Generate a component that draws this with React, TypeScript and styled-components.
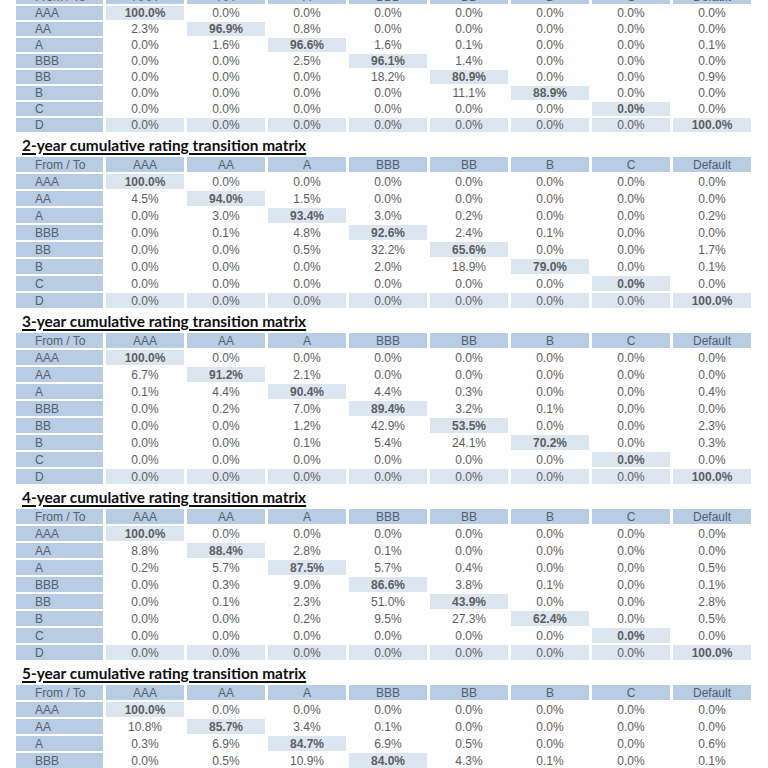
import React from "react";
import styled, { createGlobalStyle } from "styled-components";

const Global = createGlobalStyle`
  html, body { margin: 0; padding: 0; background: #ffffff; }
  body { font-family: "Liberation Sans", Arial, sans-serif; overflow: hidden; }
`;

const Page = styled.div`
  display: flex;
  flex-direction: column;
  padding-left: 16px;
  margin-top: -10px;
  width: 752px;
`;

const Section = styled.section`
  display: flex;
  flex-direction: column;
`;

const Title = styled.h2`
  margin: 0;
  height: 25px;
  display: flex;
  align-items: center;
  padding-left: 6px;
  font-family: Lato, "Open Sans", sans-serif;
  font-weight: 700;
  font-size: 15.4px;
  color: #111111;
  text-decoration: underline;
  text-decoration-thickness: 1.5px;
  text-underline-offset: 2px;
`;

const Grid = styled.div<{ $row: number }>`
  display: grid;
  grid-template-columns: 87px repeat(8, 78px);
  grid-auto-rows: ${(p) => p.$row}px;
  column-gap: 3px;
  row-gap: 2px;
`;

type Kind = "head" | "label" | "data" | "hl";

const Cell = styled.div<{ $kind: Kind; $bold?: boolean }>`
  display: flex;
  align-items: center;
  justify-content: ${(p) => (p.$kind === "label" || p.$kind === "head" ? "flex-start" : "center")};
  padding-left: ${(p) => (p.$kind === "label" ? "19px" : "0")};
  font-size: 12px;
  line-height: 1;
  font-weight: ${(p) => (p.$bold ? 700 : 400)};
  color: ${(p) => (p.$kind === "label" || p.$kind === "head" ? "#56606c" : "#5e5e5e")};
  background: ${(p) =>
    p.$kind === "label" || p.$kind === "head"
      ? "#b8cce4"
      : p.$kind === "hl"
      ? "#dce6f1"
      : "transparent"};
  white-space: nowrap;
`;

const HeadCell = styled(Cell)`
  justify-content: center;
`;

const COLS = ["AAA", "AA", "A", "BBB", "BB", "B", "C", "Default"];
const ROWS = ["AAA", "AA", "A", "BBB", "BB", "B", "C", "D"];

const C_ROW = [0, 0, 0, 0, 0, 0, 0, 0];
const D_ROW = [0, 0, 0, 0, 0, 0, 0, 100];

type Matrix = { title?: string; row: number; data: number[][] };

const matrices: Matrix[] = [
  {
    row: 14,
    data: [
      [100, 0, 0, 0, 0, 0, 0, 0],
      [2.3, 96.9, 0.8, 0, 0, 0, 0, 0],
      [0, 1.6, 96.6, 1.6, 0.1, 0, 0, 0.1],
      [0, 0, 2.5, 96.1, 1.4, 0, 0, 0],
      [0, 0, 0, 18.2, 80.9, 0, 0, 0.9],
      [0, 0, 0, 0, 11.1, 88.9, 0, 0],
      C_ROW,
      D_ROW,
    ],
  },
  {
    title: "2-year cumulative rating transition matrix",
    row: 15,
    data: [
      [100, 0, 0, 0, 0, 0, 0, 0],
      [4.5, 94.0, 1.5, 0, 0, 0, 0, 0],
      [0, 3.0, 93.4, 3.0, 0.2, 0, 0, 0.2],
      [0, 0.1, 4.8, 92.6, 2.4, 0.1, 0, 0],
      [0, 0, 0.5, 32.2, 65.6, 0, 0, 1.7],
      [0, 0, 0, 2.0, 18.9, 79.0, 0, 0.1],
      C_ROW,
      D_ROW,
    ],
  },
  {
    title: "3-year cumulative rating transition matrix",
    row: 15,
    data: [
      [100, 0, 0, 0, 0, 0, 0, 0],
      [6.7, 91.2, 2.1, 0, 0, 0, 0, 0],
      [0.1, 4.4, 90.4, 4.4, 0.3, 0, 0, 0.4],
      [0, 0.2, 7.0, 89.4, 3.2, 0.1, 0, 0],
      [0, 0, 1.2, 42.9, 53.5, 0, 0, 2.3],
      [0, 0, 0.1, 5.4, 24.1, 70.2, 0, 0.3],
      C_ROW,
      D_ROW,
    ],
  },
  {
    title: "4-year cumulative rating transition matrix",
    row: 15,
    data: [
      [100, 0, 0, 0, 0, 0, 0, 0],
      [8.8, 88.4, 2.8, 0.1, 0, 0, 0, 0],
      [0.2, 5.7, 87.5, 5.7, 0.4, 0, 0, 0.5],
      [0, 0.3, 9.0, 86.6, 3.8, 0.1, 0, 0.1],
      [0, 0.1, 2.3, 51.0, 43.9, 0, 0, 2.8],
      [0, 0, 0.2, 9.5, 27.3, 62.4, 0, 0.5],
      C_ROW,
      D_ROW,
    ],
  },
  {
    title: "5-year cumulative rating transition matrix",
    row: 15,
    data: [
      [100, 0, 0, 0, 0, 0, 0, 0],
      [10.8, 85.7, 3.4, 0.1, 0, 0, 0, 0],
      [0.3, 6.9, 84.7, 6.9, 0.5, 0, 0, 0.6],
      [0, 0.5, 10.9, 84.0, 4.3, 0.1, 0, 0.1],
    ],
  },
];

const fmt = (v: number) => `${v.toFixed(1)}%`;

function MatrixTable({ m }: { m: Matrix }) {
  return (
    <Section>
      {m.title && <Title>{m.title}</Title>}
      <Grid $row={m.row}>
        <Cell $kind="label">From / To</Cell>
        {COLS.map((c) => (
          <HeadCell key={c} $kind="head">
            {c}
          </HeadCell>
        ))}
        {m.data.map((r, i) => (
          <React.Fragment key={ROWS[i]}>
            <Cell $kind="label">{ROWS[i]}</Cell>
            {r.map((v, j) => {
              const diag = i === j;
              const isD = i === 7;
              return (
                <Cell key={j} $kind={diag || isD ? "hl" : "data"} $bold={diag}>
                  {fmt(v)}
                </Cell>
              );
            })}
          </React.Fragment>
        ))}
      </Grid>
    </Section>
  );
}

export default function App() {
  return (
    <>
      <Global />
      <Page>
        {matrices.map((m, i) => (
          <MatrixTable key={i} m={m} />
        ))}
      </Page>
    </>
  );
}
